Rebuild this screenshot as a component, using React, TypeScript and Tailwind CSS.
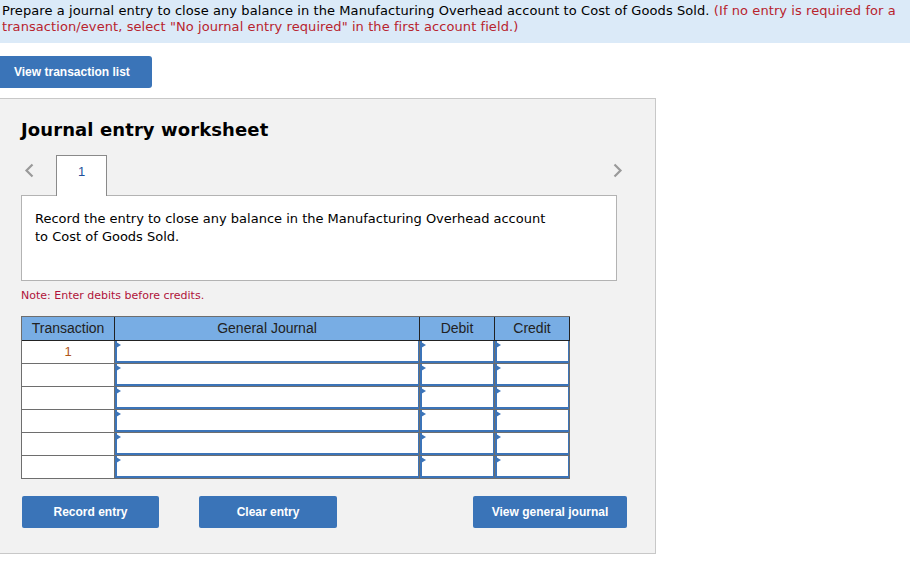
import React from "react";

const verdana = "font-['DejaVu_Sans',Verdana,sans-serif]";
const arial = "font-['Liberation_Sans',Arial,sans-serif]";

function ChevronLeft() {
  return (
    <svg width="10" height="15" viewBox="0 0 10 15" fill="none">
      <path d="M8.5 1.5 L2.5 7.5 L8.5 13.5" stroke="#9a9a9a" strokeWidth="2.2" />
    </svg>
  );
}

function ChevronRight() {
  return (
    <svg width="10" height="15" viewBox="0 0 10 15" fill="none">
      <path d="M1.5 1.5 L7.5 7.5 L1.5 13.5" stroke="#9a9a9a" strokeWidth="2.2" />
    </svg>
  );
}

function InputCell() {
  return (
    <div className="h-[23px] border-r border-b border-[#6e6e6e]">
      <div className="relative h-full border-l-2 border-r border-b-2 border-[#3c74b8] bg-white">
        <div className="absolute left-[-1px] top-[1px] h-0 w-0 border-y-[3px] border-y-transparent border-l-[5px] border-l-[#3c74b8]" />
      </div>
    </div>
  );
}

export default function App() {
  const rows = [0, 1, 2, 3, 4, 5];
  return (
    <div className="min-h-[561px] w-[910px] bg-white">
      <div className={`bg-[#dbeaf8] pl-[2px] pt-[3px] pb-[8px] text-[13px] leading-[16px] tracking-[0.08px] text-black ${verdana} whitespace-nowrap`}>
        Prepare a journal entry to close any balance in the Manufacturing Overhead account to Cost of Goods Sold.{" "}
        <span className="text-[#b8242e]">
          (If no entry is required for a
          <br />
          transaction/event, select "No journal entry required" in the first account field.)
        </span>
      </div>

      <button
        className={`mt-[13px] flex h-[32px] w-[152px] items-center rounded-r-[3px] bg-[#3a74b8] pl-[14px] text-[12px] font-bold text-white ${arial}`}
      >
        View transaction list
      </button>

      <div className="mt-[10px] w-[656px] border-t border-r border-b border-[#c8c8c8] bg-[#f2f2f2] pt-[20px] pl-[21px] pb-[25px]">
        <h2 className={`text-[18px] leading-[22px] font-bold tracking-[0.1px] text-black ${verdana}`}>Journal entry worksheet</h2>

        <div className="mt-[14px] flex h-[40px] w-[604px] items-start">
          <div className="w-[35px] pt-[8px] pl-[3px]">
            <ChevronLeft />
          </div>
          <div
            className={`relative z-10 h-[41px] w-[51px] border border-b-0 border-[#8a8a8a] bg-white pt-[8px] text-center text-[13px] leading-[16px] text-[#1f4f9a] ${arial}`}
          >
            1
          </div>
          <div className="ml-auto pt-[8px] pr-[2px]">
            <ChevronRight />
          </div>
        </div>

        <div className={`h-[86px] w-[596px] border border-[#b3b3b3] bg-white pl-[13px] pt-[14px] text-[13px] leading-[18px] text-black ${verdana}`}>
          Record the entry to close any balance in the Manufacturing Overhead account
          <br />
          to Cost of Goods Sold.
        </div>

        <p className={`mt-[8px] text-[11px] leading-[14px] text-[#b0123a] ${verdana}`}>Note: Enter debits before credits.</p>

        <div className={`mt-[13px] grid w-[549px] grid-cols-[93px_305px_75px_75px] border-l border-t border-[#6e6e6e] ${arial}`}>
          <div className="h-[24px] border-r border-b border-r-[#222] border-b-[#222] bg-[#78ade4] text-center text-[14px] leading-[23px] text-[#222]">
            Transaction
          </div>
          <div className="h-[24px] border-r border-b border-[#222] bg-[#78ade4] text-center text-[14px] leading-[23px] text-[#222]">
            General Journal
          </div>
          <div className="h-[24px] border-r border-b border-[#222] bg-[#78ade4] text-center text-[14px] leading-[23px] text-[#222]">
            Debit
          </div>
          <div className="h-[24px] border-r border-b border-[#222] bg-[#78ade4] text-center text-[14px] leading-[23px] text-[#222]">
            Credit
          </div>

          {rows.map((r) => (
            <React.Fragment key={r}>
              <div className="h-[23px] border-r border-b border-[#6e6e6e] bg-white text-center text-[13px] leading-[22px] text-[#b0561a]">
                {r === 0 ? "1" : ""}
              </div>
              <InputCell />
              <InputCell />
              <InputCell />
            </React.Fragment>
          ))}
        </div>

        <div className={`mt-[17px] flex text-[12px] font-bold text-white ${arial}`}>
          <button className="ml-[1px] h-[32px] w-[137px] rounded-[2px] bg-[#3a74b8]">Record entry</button>
          <button className="ml-[40px] h-[32px] w-[138px] rounded-[2px] bg-[#3a74b8]">Clear entry</button>
          <button className="ml-[136px] h-[32px] w-[154px] rounded-[2px] bg-[#3a74b8]">View general journal</button>
        </div>
      </div>
    </div>
  );
}
